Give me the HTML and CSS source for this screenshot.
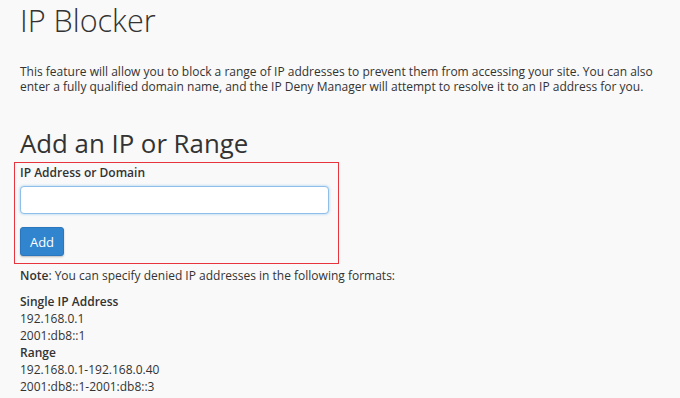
FILE: index.html
```html
<!DOCTYPE html>
<html>
<head>
<meta charset="utf-8">
<link rel="stylesheet" href="styles.css">
</head>
<body>
<div class="page">
  <h1 class="title">IP Blocker</h1>
  <p class="intro">This feature will allow you to block a range of IP addresses to prevent them from accessing your site. You can also enter a fully qualified domain name, and the IP Deny Manager will attempt to resolve it to an IP address for you.</p>
  <h2 class="subtitle">Add an IP or Range</h2>
  <div class="highlight">
    <label class="label" for="ip">IP Address or Domain</label>
    <input class="input" id="ip" type="text">
    <button class="btn">Add</button>
  </div>
  <p class="note"><strong>Note</strong>: You can specify denied IP addresses in the following formats:</p>
  <div class="formats">
    <div class="fmt-head">Single IP Address</div>
    <div>192.168.0.1</div>
    <div>2001:db8::1</div>
    <div class="fmt-head">Range</div>
    <div>192.168.0.1-192.168.0.40</div>
    <div>2001:db8::1-2001:db8::3</div>
  </div>
</div>
</body>
</html>
```
FILE: styles.css
```css
html, body {
  margin: 0;
  padding: 0;
  background: #f9f9f9;
}
body {
  font-family: "Open Sans", "Liberation Sans", sans-serif;
  color: #333;
  font-size: 12px;
}
.page {
  padding: 0 20px;
}
.title {
  margin: 0;
  padding-top: 3px;
  font-size: 30.6px;
  font-weight: 300;
  line-height: 35px;
}
.intro {
  margin: 26px 0 0;
  line-height: 15px;
}
.subtitle {
  margin: 34px 0 0;
  font-size: 25.8px;
  font-weight: 400;
  line-height: 30px;
}
.highlight {
  margin: 4px 0 0 -6px;
  width: 313px;
  border: 1px solid #e8343c;
  padding: 2px 5px 7px 5px;
  display: flex;
  flex-direction: column;
  align-items: flex-start;
}
.label {
  font-weight: 600;
  font-size: 12px;
  line-height: 16px;
}
.input {
  margin-top: 5px;
  width: 309px;
  height: 28px;
  box-sizing: border-box;
  border: 1px solid #8ebfe9;
  border-radius: 4px;
  background: #fff;
  box-shadow: 0 0 3px rgba(102, 175, 233, 0.6);
  outline: none;
}
.btn {
  margin-top: 13px;
  width: 44px;
  height: 29px;
  border: 1px solid #2a77bd;
  border-radius: 3px;
  background: #3185cf;
  color: #fff;
  font-family: inherit;
  font-size: 13px;
  padding: 0;
  box-shadow: 0 1px 2px rgba(0,0,0,0.25);
}
.note {
  margin: 3px 0 0;
  line-height: 17px;
}
.formats {
  margin-top: 9px;
  line-height: 17px;
}
.fmt-head, .note strong {
  font-weight: 600;
}
```
